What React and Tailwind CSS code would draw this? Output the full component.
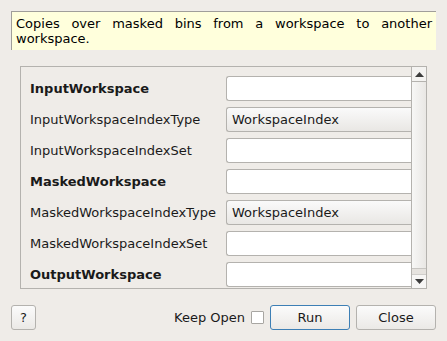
import React from 'react';

const rows = [
  { label: 'InputWorkspace', bold: true, kind: 'text' },
  { label: 'InputWorkspaceIndexType', kind: 'combo', value: 'WorkspaceIndex' },
  { label: 'InputWorkspaceIndexSet', kind: 'text' },
  { label: 'MaskedWorkspace', bold: true, kind: 'text' },
  { label: 'MaskedWorkspaceIndexType', kind: 'combo', value: 'WorkspaceIndex' },
  { label: 'MaskedWorkspaceIndexSet', kind: 'text' },
  { label: 'OutputWorkspace', bold: true, kind: 'text' },
];

const PropertyRow = ({ row }) => (
  <div className="flex items-center h-[25px]">
    <div
      className={`w-[205px] shrink-0 pl-[9px] text-[13px] text-[#1a1a1a] whitespace-nowrap ${
        row.bold ? 'font-bold' : ''
      }`}
    >
      {row.label}
    </div>
    {row.kind === 'combo' ? (
      <div className="flex-1 h-[25px] flex items-center pl-[5px] text-[13px] text-[#1a1a1a] border border-[#b4b2ae] rounded-l-[3px] border-r-0 bg-gradient-to-b from-[#fafafa] to-[#e9e7e4]">
        {row.value}
      </div>
    ) : (
      <div className="flex-1 h-[25px] bg-white border border-[#b4b2ae] border-r-0 rounded-l-[3px]" />
    )}
  </div>
);

const ScrollBar = () => (
  <div className="w-[15px] border-l border-[#b4b2ae] flex flex-col bg-[#e6e3df]">
    <div className="h-[15px] border-b border-[#b4b2ae] bg-[#f4f3f1] flex items-center justify-center">
      <svg width="9" height="5" viewBox="0 0 9 5">
        <polygon points="0,5 9,5 4.5,0" fill="#3c3c3c" />
      </svg>
    </div>
    <div className="flex-1 bg-gradient-to-r from-[#f7f7f6] to-[#e9e7e4] border-b border-[#c8c6c2] mb-[5px]" />
    <div className="h-[14px] border-t border-[#d0cecb] bg-[#f7f6f5] flex items-center justify-center">
      <svg width="9" height="5" viewBox="0 0 9 5">
        <polygon points="0,0 9,0 4.5,5" fill="#3c3c3c" />
      </svg>
    </div>
  </div>
);

const Button = ({ children, className = '' }) => (
  <div
    className={`h-[25px] flex items-center justify-center text-[13px] text-[#1a1a1a] rounded-[3px] border bg-gradient-to-b from-[#fbfbfb] to-[#ebe9e6] ${className}`}
  >
    {children}
  </div>
);

export default function App() {
  return (
    <div
      className="w-[447px] h-[341px] bg-[#efece8] flex flex-col overflow-hidden"
      style={{ fontFamily: '"DejaVu Sans", sans-serif' }}
    >
      <div className="mx-[11px] mt-[11px] h-[39px] bg-[#ffffdc] border-l border-t border-[#a09e9a] pl-[4px] pr-[4px] pt-[4px] text-[13px] leading-[15px] text-black text-justify">
        Copies over masked bins from a workspace to another workspace.
      </div>

      <div className="ml-[20px] mr-[20px] mt-[16px] h-[223px] border border-[#b4b2ae] flex">
        <div className="flex-1 overflow-hidden pt-[9px] flex flex-col gap-[6px]">
          {rows.map((r) => (
            <PropertyRow key={r.label} row={r} />
          ))}
        </div>
        <ScrollBar />
      </div>

      <div className="flex items-center mt-[16px] px-[11px]">
        <Button className="w-[25px] border-[#b4b2ae]">?</Button>
        <div className="flex-1" />
        <span className="text-[13px] text-[#1a1a1a] mr-[6px]">Keep Open</span>
        <div className="w-[13px] h-[13px] bg-white border border-[#a8a6a2] rounded-[1px] mr-[6px]" />
        <Button className="w-[80px] border-[#3d7fb5] mr-[6px] from-[#f4f6f8] to-[#e4e8ec]">Run</Button>
        <Button className="w-[80px] border-[#b4b2ae]">Close</Button>
      </div>
    </div>
  );
}
